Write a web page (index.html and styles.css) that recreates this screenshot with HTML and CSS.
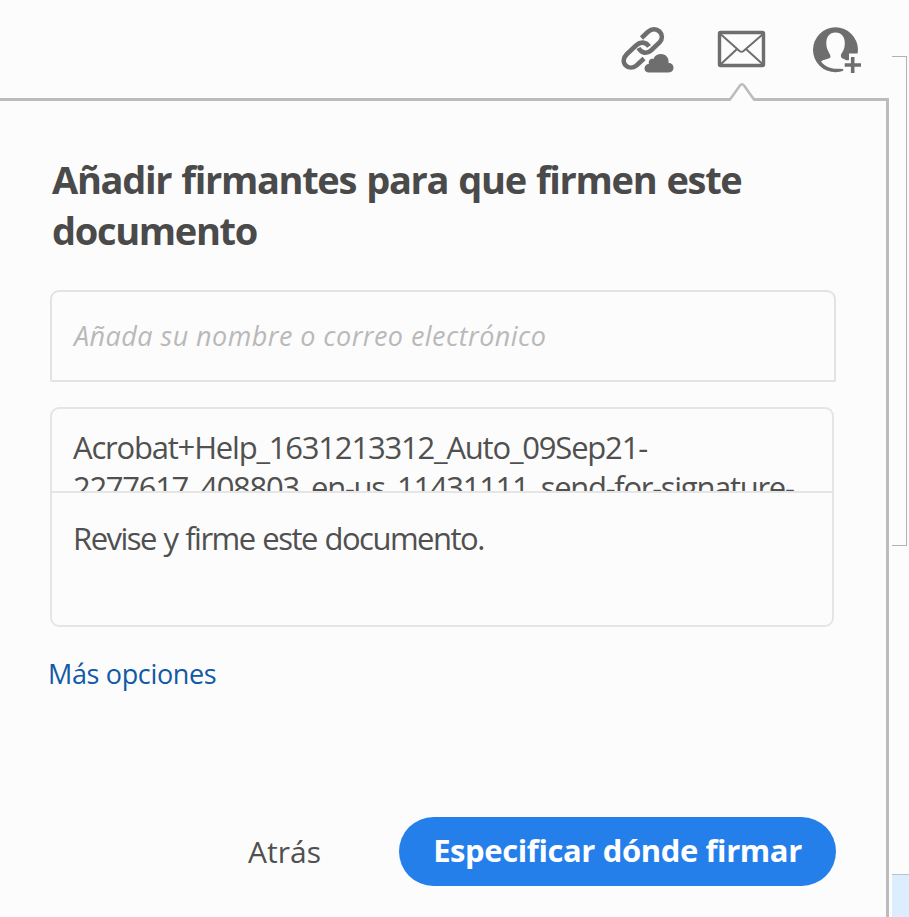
FILE: index.html
```html
<!DOCTYPE html>
<html lang="es">
<head>
  <meta charset="UTF-8" />
  <meta name="viewport" content="width=device-width, initial-scale=1" />
  <title>Añadir firmantes</title>
  <link rel="stylesheet" href="styles.css">
</head>
<body>
  <div class="app">
    <main class="main">
      <header class="toolbar">
        <svg class="icon" width="54" height="50" viewBox="0 0 54 50">
          <g fill="none" stroke="#6e6e6e" stroke-width="4.600">
            <path d="M21.500 12L28 5.800C32 2.400 36.500 2.600 39.500 5.500C42.800 8.800 42.500 13 39.500 16.500L31 24.500C27 28 21.500 27.500 18.500 22"/>
            <path d="M29 20.500C25.500 15.500 20.500 15.500 16 19.500L7 28C3.500 31.500 2.600 36 5.500 39.200C8.500 42.400 13 42.200 16.500 39.500L24 32.500"/>
          </g>
          <path fill="#6e6e6e" d="M29 46.500C26.500 46.500 24.500 45 24.500 42.500C24.500 40 26.500 38 29 37.800C28 34.500 30.500 32 33.500 33C34.500 29.800 37.500 28 41 28C46 28 49.300 32 48.500 37C51.500 37 53.500 39 53.500 41.800C53.500 44.700 51.300 46.500 48.500 46.500Z"/>
        </svg>
        <svg class="icon" width="50" height="50" viewBox="0 0 50 50">
          <rect x="3.500" y="6.500" width="44" height="33" rx="1" fill="none" stroke="#6e6e6e" stroke-width="3.400"/>
          <path d="M5 8.500L23.500 25Q25.500 26.500 27.500 25L46.500 8.500M5 38L20.500 23.500M46.500 38L30.500 23.500" fill="none" stroke="#6e6e6e" stroke-width="2"/>
        </svg>
        <svg class="icon" width="50" height="50" viewBox="0 0 50 50">
          <circle cx="23.500" cy="23.800" r="22.500" fill="#6e6e6e"/>
          <path fill="#fcfcfc" d="M23.500 6.500C29.500 6.500 32.800 10.500 32.800 17.500C32.800 23 30.500 26 29 28.500C28.500 31 29.500 32.500 32 33L37 36L33 43L25 42.800C19 43 13 40.500 9 35.500C11.500 33 17.500 33.500 18.500 31C18.800 28 14.300 24.500 14.300 17.500C14.300 10.500 17.500 6.500 23.500 6.500Z"/>
          <path fill="#fcfcfc" d="M37 27.500H50V50H32.500L31 43L29.500 35.500L37 34Z"/>
          <path d="M40.700 31V47M32.700 39H49" stroke="#6e6e6e" stroke-width="3.600"/>
        </svg>
      </header>

      <section class="panel">
        <svg class="arrow" width="32" height="22" viewBox="0 0 32 22">
          <path d="M4 22V18.500L14 4.500Q16 2 18 4.500L28 18.500V22Z" fill="#fcfcfc"/>
          <path d="M0 18.500H4L14 4.500Q16 2 18 4.500L28 18.500H32" fill="none" stroke="#bcbcbc" stroke-width="2.600"/>
        </svg>
        <h2 class="title">Añadir firmantes para que firmen este documento</h2>
        <div class="recipient">Añada su nombre o correo electrónico</div>
        <div class="message">
          <div class="subject"><span class="subject-first">Acrobat+Help_1631213312_Auto_09Sep21-</span><br><span class="subject-rest">2277617_408803_en-us_11431111_send-for-signature-</span></div>
          <div class="note">Revise y firme este documento.</div>
        </div>
        <a class="more">Más opciones</a>
        <div class="actions">
          <a class="back">Atrás</a>
          <a class="next">Especificar dónde firmar</a>
        </div>
      </section>
    </main>

    <aside class="side">
      <div class="side-page"></div>
      <div class="side-selected"></div>
    </aside>
  </div>
</body>
</html>
```
FILE: styles.css
```css
* { box-sizing: border-box; }
body { margin: 0; background: #fcfcfc; color: #505050; font-family: "Open Sans", "Noto Sans", sans-serif; overflow: hidden; }
.app { display: flex; width: 909px; height: 917px; }
.main { width: 892px; display: flex; flex-direction: column; }

.toolbar { height: 98px; padding: 26px 30px 0 0; display: flex; justify-content: flex-end; gap: 46px; }
.toolbar .icon:first-child { margin-right: -4px; }
.icon { display: block; }

.panel { position: relative; width: 889px; flex: 1; padding: 53px 50px 0 50px; border-top: 3px solid #bcbcbc; border-right: 3px solid #bcbcbc; white-space: nowrap; }
.arrow { position: absolute; left: 726px; top: -20px; }
.title { margin: 0 0 0 2px; width: 720px; font-size: 38px; line-height: 51px; font-weight: 700; color: #4a4a4a; letter-spacing: -1.32px; word-spacing: 1.6px; white-space: normal; }

.recipient { width: 786px; height: 92px; margin-top: 34px; padding: 26px 22px; border: 2px solid #e3e3e3; border-radius: 9px 9px 2px 2px; font-size: 27px; line-height: 36px; font-style: italic; color: #b9b9b9; letter-spacing: 0.45px; }
.message { width: 784px; height: 220px; margin-top: 25px; border: 2px solid #e5e5e5; border-radius: 9px; }
.subject { height: 84px; padding: 18px 21px 0; border-bottom: 2px solid #e5e5e5; overflow: hidden; font-size: 31px; line-height: 40px; }
.subject-first { letter-spacing: -1.2px; }
.subject-rest { letter-spacing: -1.3px; }
.note { padding: 25px 21px; font-size: 31px; line-height: 40px; letter-spacing: -1.5px; word-spacing: 1px; }

.more { display: block; margin: 29px 0 0 -2px; font-size: 27px; line-height: 36px; color: #1259a6; letter-spacing: -0.35px; }
.actions { display: flex; justify-content: flex-end; align-items: center; gap: 78px; width: 786px; margin-top: 125px; }
.back { font-size: 30px; line-height: 40px; }
.next { width: 437px; height: 69px; border-radius: 35px; background: #257feb; color: #fff; font-size: 31px; line-height: 66px; font-weight: 700; text-align: center; letter-spacing: -0.4px; }

.side { width: 17px; display: flex; flex-direction: column; }
.side-page { width: 15px; height: 490px; margin-top: 56px; border: 1px solid #b2b2b2; border-left: 0; }
.side-selected { flex: 1; margin-top: 328px; border-top: 1px solid #b8c4cc; background: #dceefe; }
```
